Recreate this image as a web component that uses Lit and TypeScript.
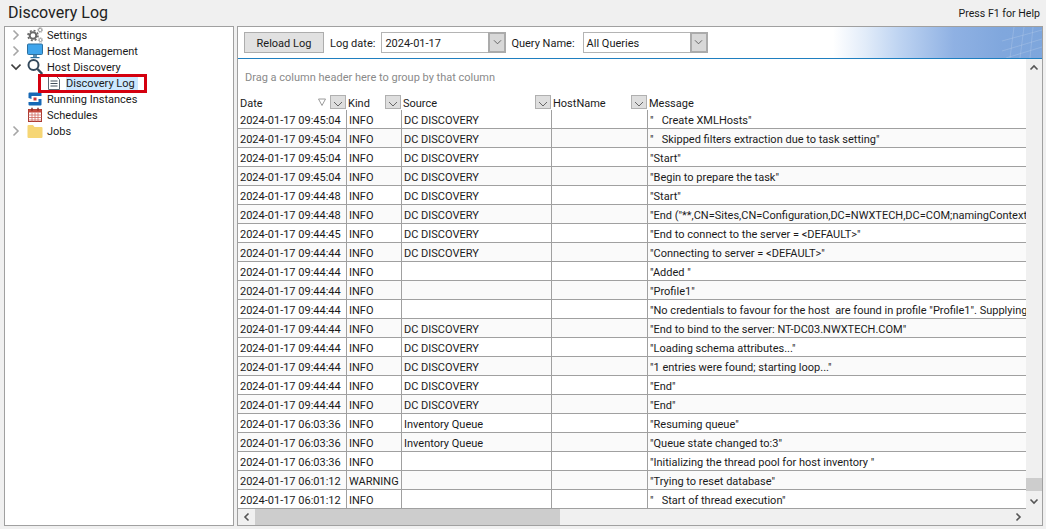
import { LitElement, html, css, svg } from "lit";
import { customElement } from "lit/decorators.js";

type Row = [string, string, string, string];
const D = "2024-01-17 ";
const DC = "DC DISCOVERY";
const IQ = "Inventory Queue";
const rows: Row[] = [
  ["09:45:04", "INFO", DC, '"   Create XMLHosts"'],
  ["09:45:04", "INFO", DC, '"   Skipped filters extraction due to task setting"'],
  ["09:45:04", "INFO", DC, '"Start"'],
  ["09:45:04", "INFO", DC, '"Begin to prepare the task"'],
  ["09:44:48", "INFO", DC, '"Start"'],
  ["09:44:48", "INFO", DC, '"End ("**,CN=Sites,CN=Configuration,DC=NWXTECH,DC=COM;namingContexts;0")"'],
  ["09:44:45", "INFO", DC, '"End to connect to the server = <DEFAULT>"'],
  ["09:44:44", "INFO", DC, '"Connecting to server = <DEFAULT>"'],
  ["09:44:44", "INFO", "", '"Added "'],
  ["09:44:44", "INFO", "", '"Profile1"'],
  ["09:44:44", "INFO", "", '"No credentials to favour for the host  are found in profile "Profile1". Supplying default"'],
  ["09:44:44", "INFO", DC, '"End to bind to the server: NT-DC03.NWXTECH.COM"'],
  ["09:44:44", "INFO", DC, '"Loading schema attributes..."'],
  ["09:44:44", "INFO", DC, '"1 entries were found; starting loop..."'],
  ["09:44:44", "INFO", DC, '"End"'],
  ["09:44:44", "INFO", DC, '"End"'],
  ["06:03:36", "INFO", IQ, '"Resuming queue"'],
  ["06:03:36", "INFO", IQ, '"Queue state changed to:3"'],
  ["06:03:36", "INFO", "", '"Initializing the thread pool for host inventory "'],
  ["06:01:12", "WARNING", "", '"Trying to reset database"'],
  ["06:01:12", "INFO", "", '"   Start of thread execution"'],
];

const chevR = svg`<svg class="exp" viewBox="0 0 10 12"><path d="M2.500 1.500 7 6l-4.500 4.500" fill="none" stroke="#a6a6a6" stroke-width="1.600"/></svg>`;
const chevD = svg`<svg class="exp" viewBox="0 0 10 12"><path d="M.5 3.500 5 8l4.500-4.500" fill="none" stroke="#404040" stroke-width="1.600"/></svg>`;
const noExp = html`<span class="exp"></span>`;

const gear = svg`<svg class="ico" viewBox="0 0 16 16">
  <circle cx="6" cy="8.500" r="3.300" fill="none" stroke="#686868" stroke-width="2"/>
  <circle cx="6" cy="8.500" r="5" fill="none" stroke="#686868" stroke-width="1.600" stroke-dasharray="2 1.930"/>
  <circle cx="13.200" cy="3" r="1.700" fill="none" stroke="#9c9c9c" stroke-width="1"/>
  <circle cx="13.200" cy="3" r="2.500" fill="none" stroke="#9c9c9c" stroke-width=".7" stroke-dasharray="1.300 .65"/>
  <circle cx="13.500" cy="13" r="1.500" fill="none" stroke="#9c9c9c" stroke-width="1"/>
  <circle cx="13.500" cy="13" r="2.300" fill="none" stroke="#9c9c9c" stroke-width=".7" stroke-dasharray="1.200 .6"/>
</svg>`;
const monitor = svg`<svg class="ico" viewBox="0 0 16 16">
  <rect x=".5" y="1" width="15" height="10.500" rx="1" fill="#3fa5ec" stroke="#2c6f9e"/>
  <rect x="6" y="12" width="4" height="2" fill="#5f8fb0"/>
  <rect x="3.500" y="14" width="9" height="1.200" fill="#2c6f9e"/>
</svg>`;
const magnifier = svg`<svg class="ico" viewBox="0 0 16 16">
  <circle cx="6.500" cy="6" r="5" fill="none" stroke="#33495c" stroke-width="2"/>
  <path d="M10.500 10 15.200 15" stroke="#33495c" stroke-width="2.400"/>
</svg>`;
const doc = svg`<svg class="ico" viewBox="0 0 16 16">
  <path d="M2.500 1.500h8l3 3v10h-11z" fill="#fff" stroke="#5c6873"/>
  <path d="M4.500 6h7M4.500 8.500h7M4.500 11h7" stroke="#44505c"/>
</svg>`;
const running = svg`<svg class="ico" viewBox="0 0 16 16">
  <path d="M1.500 7V2.500q0-1 1-1h11q1 0 1 1V5H4.500v3z" fill="#1668b5"/>
  <path d="M14.500 8v5.500q0 1-1 1h-11q-1 0-1-1V11h10V8z" fill="#1668b5"/>
  <rect x="6.500" y="6.500" width="3" height="3" fill="#c8343a"/>
</svg>`;
const calendar = svg`<svg class="ico" viewBox="0 0 16 16">
  <rect x="1.500" y="2.500" width="13" height="12" fill="#fff" stroke="#a8382f"/>
  <rect x="1.500" y="2.500" width="13" height="3" fill="#c64a3e"/>
  <path d="M5 .8v3M11 .8v3" stroke="#8a2c25" stroke-width="1.400"/>
  <path d="M1.500 8h13M1.500 10.500h13M1.500 13h13M5 5.500v9M8 5.500v9M11 5.500v9" stroke="#cf6a60" stroke-width=".8"/>
</svg>`;
const folder = svg`<svg class="ico" viewBox="0 0 16 16">
  <path d="M.5 3q0-1 1-1h4.500l1.500 2h7q1 0 1 1v9q0 1-1 1h-13q-1 0-1-1z" fill="#f6d675"/>
</svg>`;
const miniChev = svg`<svg viewBox="0 0 12 8" class="mini"><path d="M2 1.500 6 5.500l4-4" fill="none" stroke="#555" stroke-width="1"/></svg>`;
const hdrBtn = html`<span class="hbtn"><svg viewBox="0 0 10 6" class="hchev"><path d="M1 1l4 4 4-4" fill="none" stroke="#666"/></svg></span>`;
const barArt = svg`<svg class="art" viewBox="0 0 40 31">
  <path d="M8 31 12 0M18 31 22 0M28 31 31 0M0 24 40 12M4 31 40 20M0 14 40 3" stroke="#b9cdec" stroke-width=".7" fill="none" opacity=".5"/>
</svg>`;

@customElement("app-root")
export class AppRoot extends LitElement {
  static styles = css`
    :host {
      display: flex;
      flex-direction: column;
      width: 1046px;
      height: 529px;
      background: #f0f0f0;
      font: 11px Roboto, sans-serif;
      color: #1a1a1a;
      overflow: hidden;
      box-sizing: border-box;
    }
    * { box-sizing: border-box; }
    .top {
      height: 26px;
      display: flex;
      justify-content: space-between;
      padding: 0 6px 0 8px;
      flex: none;
    }
    .title { font-size: 16px; line-height: 25px; color: #222; }
    .help { font-size: 10.6px; line-height: 28px; }
    .main {
      flex: 1;
      display: flex;
      gap: 3px;
      padding: 0 3px 3px 4px;
      min-height: 0;
    }
    .tree {
      width: 230px;
      background: #fff;
      border: 1px solid #a0a0a0;
      position: relative;
      flex: none;
    }
    .node {
      height: 16px;
      display: flex;
      align-items: center;
      padding-left: 6px;
    }
    .node span.t { height: 16px; line-height: 18px; }
    .exp { width: 10px; height: 12px; margin-right: 6px; flex: none; display: block; }
    .ico { width: 16px; height: 16px; flex: none; margin-right: 4px; display: block; }
    .node.child { padding-left: 41px; }
    .node span.sel { background: #cce8ff; padding-right: 3px; }
    .redbox {
      position: absolute;
      left: 33px;
      top: 47px;
      width: 109px;
      height: 19px;
      border: 3px solid #d4000f;
    }
    .panel {
      flex: 1;
      min-width: 0;
      border: 1px solid #a0a0a0;
      display: flex;
      flex-direction: column;
      background: #f0f0f0;
    }
    .bar {
      height: 32px;
      flex: none;
      border-bottom: 1px solid #1f7fc0;
      background: linear-gradient(90deg, #fff 0, #fff 74%, #e2ecf9 78%, #c0d5f2 82%, #8fb1e3 89%, #80a7dd 95%, #7ea6dc 100%);
      display: flex;
      align-items: center;
      padding-left: 6px;
      position: relative;
    }
    .art { position: absolute; right: 0; top: 0; width: 40px; height: 31px; display: block; }
    .btn {
      width: 80px;
      height: 21px;
      background: #e1e1e1;
      border: 1px solid #adadad;
      text-align: center;
      line-height: 21px;
      margin-right: 6px;
      flex: none;
    }
    .lbl { margin-right: 6px; flex: none; padding-top: 2px; }
    .combo {
      height: 21px;
      background: #fff;
      border: 1px solid #b4b4b4;
      display: flex;
      align-items: center;
      padding-left: 3px;
      justify-content: space-between;
      flex: none;
    }
    .combo .v { padding-top: 2px; }
    .combo.date { width: 125px; margin-right: 5px; }
    .combo.query { width: 125px; margin-left: 2px; }
    .cbtn {
      width: 18px;
      height: 21px;
      margin: -1px -1px -1px 0;
      background: #d8d8d8;
      border: 2px solid #ababab;
      display: flex;
      align-items: center;
      justify-content: center;
      flex: none;
    }
    .mini { width: 11px; height: 7px; }
    .grid-area {
      flex: 1;
      min-height: 0;
      display: flex;
      flex-direction: column;
    }
    .upper {
      flex: 1;
      min-height: 0;
      display: flex;
    }
    .content { flex: 1; min-width: 0; display: flex; flex-direction: column; background: #fff; }
    .group {
      height: 36px;
      flex: none;
      color: #8a8a8a;
      padding: 9px 0 0 7px;
      line-height: 19px;
    }
    .row {
      display: grid;
      grid-template-columns: 108px 55px 150px 96px 1fr;
      flex: none;
      overflow: hidden;
    }
    .head { height: 15px; line-height: 15px; }
    .hc { display: flex; align-items: center; padding: 1px 0 0 2px; position: relative; white-space: nowrap; }
    .hbtn {
      position: absolute;
      right: 0;
      top: 0;
      width: 16px;
      height: 14px;
      background: #dedede;
      border: 1px solid #b0b0b0;
      display: flex;
      align-items: flex-end;
      justify-content: center;
      padding-bottom: 1px;
    }
    .hchev { width: 10px; height: 6px; display: block; }
    .filter {
      position: absolute;
      right: 20px;
      top: 3px;
      width: 8px;
      height: 8px;
    }
    .body { flex: 1; min-height: 0; overflow: hidden; }
    .dr { height: 19px; border-bottom: 1px solid #a0a0a0; }
    .dr:nth-child(even) { background: #fafafa; }
    .c {
      padding-left: 2px;
      border-left: 1px solid #a0a0a0;
      white-space: pre;
      overflow: hidden;
      height: 19px;
      line-height: 21px;
    }
    .c:first-child { border-left: 0; padding-left: 2px; }
    .vbar {
      width: 16px;
      flex: none;
      background: #f0f0f0;
      display: flex;
      flex-direction: column;
      align-items: stretch;
    }
    .arrow { height: 17px; flex: none; display: flex; align-items: center; justify-content: center; }
    .arrow svg { width: 10px; height: 10px; display: block; }
    .vtrack { flex: 1; display: flex; flex-direction: column; justify-content: flex-end; }
    .vthumb { height: 13px; background: #cdcdcd; margin-bottom: 1px; }
    .hbar {
      height: 16px;
      flex: none;
      display: flex;
      background: #f0f0f0;
      align-items: stretch;
    }
    .harrow { width: 17px; flex: none; display: flex; align-items: center; justify-content: center; }
    .harrow svg { width: 10px; height: 10px; display: block; }
    .htrack { flex: 1; min-width: 0; display: flex; }
    .hthumb { width: 305px; background: #cdcdcd; }
    .corner { width: 16px; flex: none; }
  `;

  render() {
    return html`
      <div class="top">
        <div class="title">Discovery Log</div>
        <div class="help">Press F1 for Help</div>
      </div>
      <div class="main">
        <div class="tree">
          <div class="node">${chevR}${gear}<span class="t">Settings</span></div>
          <div class="node">${chevR}${monitor}<span class="t">Host Management</span></div>
          <div class="node">${chevD}${magnifier}<span class="t">Host Discovery</span></div>
          <div class="node child">${doc}<span class="t sel">Discovery Log</span></div>
          <div class="node">${noExp}${running}<span class="t">Running Instances</span></div>
          <div class="node">${noExp}${calendar}<span class="t">Schedules</span></div>
          <div class="node">${chevR}${folder}<span class="t">Jobs</span></div>
          <div class="redbox"></div>
        </div>
        <div class="panel">
          <div class="bar">
            ${barArt}
            <div class="btn">Reload Log</div>
            <span class="lbl">Log date:</span>
            <div class="combo date"><span class="v">2024-01-17</span><span class="cbtn">${miniChev}</span></div>
            <span class="lbl">Query Name:</span>
            <div class="combo query"><span class="v">All Queries</span><span class="cbtn">${miniChev}</span></div>
          </div>
          <div class="grid-area">
            <div class="upper">
              <div class="content">
                <div class="group">Drag a column header here to group by that column</div>
                <div class="row head">
                  <div class="hc">Date
                    <svg class="filter" viewBox="0 0 8 8"><path d="M.5 1h7L4 7.500z" fill="none" stroke="#9a9a9a"/></svg>
                    ${hdrBtn}</div>
                  <div class="hc">Kind${hdrBtn}</div>
                  <div class="hc">Source${hdrBtn}</div>
                  <div class="hc">HostName${hdrBtn}</div>
                  <div class="hc">Message</div>
                </div>
                <div class="body">
                  ${rows.map(
                    (r) => html`<div class="row dr">
                      <div class="c">${D + r[0]}</div>
                      <div class="c">${r[1]}</div>
                      <div class="c">${r[2]}</div>
                      <div class="c"></div>
                      <div class="c">${r[3]}</div>
                    </div>`
                  )}
                </div>
              </div>
              <div class="vbar">
                <div class="arrow"><svg viewBox="0 0 10 10"><path d="M1.500 6.500 5 3l3.500 3.500" fill="none" stroke="#555" stroke-width="1.600"/></svg></div>
                <div class="vtrack"><div class="vthumb"></div></div>
                <div class="arrow"><svg viewBox="0 0 10 10"><path d="M1.500 3.500 5 7l3.500-3.500" fill="none" stroke="#555" stroke-width="1.600"/></svg></div>
              </div>
            </div>
            <div class="hbar">
              <div class="harrow"><svg viewBox="0 0 10 10"><path d="M6.500 1.500 3 5l3.500 3.500" fill="none" stroke="#555" stroke-width="1.600"/></svg></div>
              <div class="htrack"><div class="hthumb"></div></div>
              <div class="harrow"><svg viewBox="0 0 10 10"><path d="M3.500 1.500 7 5l-3.500 3.500" fill="none" stroke="#555" stroke-width="1.600"/></svg></div>
              <div class="corner"></div>
            </div>
          </div>
        </div>
      </div>
    `;
  }
}
